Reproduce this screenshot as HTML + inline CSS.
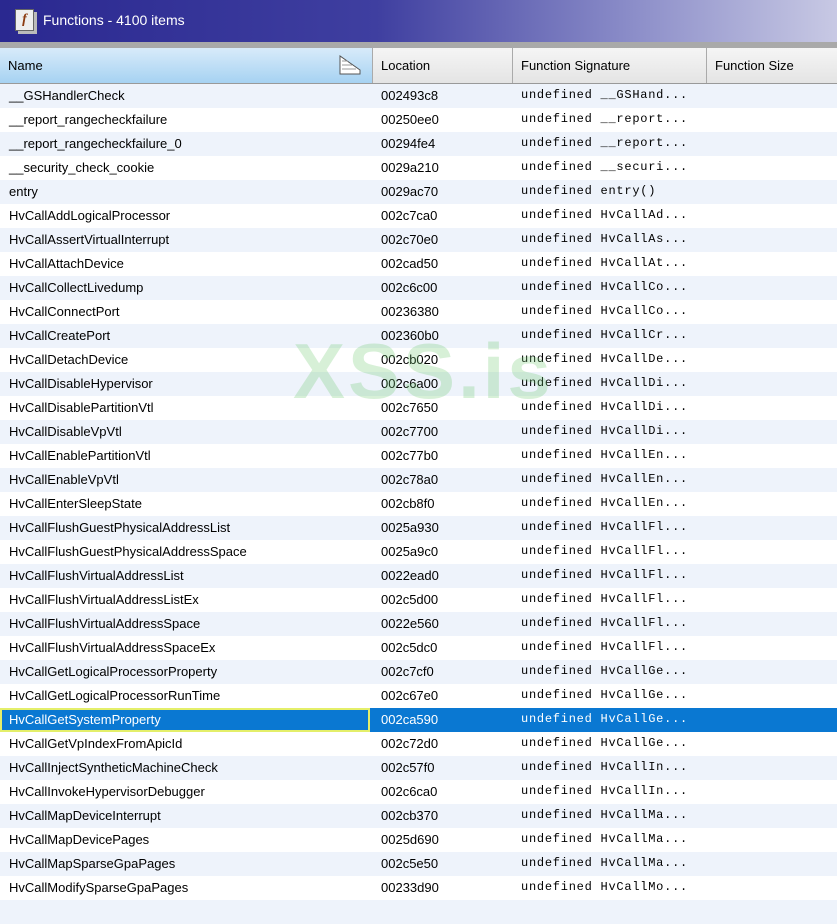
<!DOCTYPE html>
<html><head><style>
body{margin:0;width:837px;height:904px;overflow:hidden;background:#fff;font-family:"Liberation Sans",sans-serif;font-size:13px;color:#000;position:relative}
.title{position:absolute;left:0;top:0;width:837px;height:42px;background:linear-gradient(90deg,#2a2890 0%,#3f3fa0 45%,#8a8cc8 75%,#c8c9e4 100%);color:#fff;font-size:14px}
.title span{position:absolute;left:43px;top:12px}
.ic{position:absolute;left:15px;top:9px;width:17px;height:20px;background:#eee;border:1px solid #666;box-shadow:3px 3px 0 #bbb;font:italic bold 14px "Liberation Serif",serif;color:#8b3a10;text-align:center;line-height:20px}
.sep{position:absolute;top:42px;left:0;width:837px;height:6px;background:#a9a9a9}
.hdr{position:absolute;top:48px;left:0;width:837px;height:35px;background:linear-gradient(#f5f5f5,#e4e4e4);border-bottom:2px solid #999}
.hdr div{position:absolute;top:0;height:35px;line-height:36px;padding-left:8px;box-sizing:border-box;border-left:1px solid #aaa}
.rows{position:absolute;top:84px;left:0;width:837px}
.r{height:24px;line-height:24px;position:relative}
.r:nth-child(odd){background:#eef3fb}
.r span{position:absolute;top:0}
.a{left:9px}.b{left:381px}.c{left:521px;font-family:"Liberation Mono",monospace;font-size:12px;letter-spacing:0.75px;line-height:22px}
.sel{background:#0a78d2!important;color:#fff}
.wm{position:absolute;left:293px;top:326px;font:bold 78px "Liberation Sans",sans-serif;color:rgba(110,200,110,.28);letter-spacing:3px}
</style></head><body>
<div class="title"><div class="ic">f</div><span>Functions - 4100 items</span></div>
<div class="sep"></div>
<div class="hdr">
<div style="left:0;width:372px;border:0;background:linear-gradient(#d8ebfa,#a6d2f2)">Name<svg style="position:absolute;left:338px;top:7px" width="24" height="20"><path d="M2 1V19H22V15L2 1Z" fill="#fff" stroke="#555"/><path d="M4 6h6M4 10h10M4 14h14" stroke="#999"/></svg></div>
<div style="left:372px;width:140px">Location</div>
<div style="left:512px;width:194px">Function Signature</div>
<div style="left:706px;width:131px">Function Size</div>
</div>
<div class="rows">
<div class="r"><span class="a">__GSHandlerCheck</span><span class="b">002493c8</span><span class="c">undefined __GSHand...</span></div>
<div class="r"><span class="a">__report_rangecheckfailure</span><span class="b">00250ee0</span><span class="c">undefined __report...</span></div>
<div class="r"><span class="a">__report_rangecheckfailure_0</span><span class="b">00294fe4</span><span class="c">undefined __report...</span></div>
<div class="r"><span class="a">__security_check_cookie</span><span class="b">0029a210</span><span class="c">undefined __securi...</span></div>
<div class="r"><span class="a">entry</span><span class="b">0029ac70</span><span class="c">undefined entry()</span></div>
<div class="r"><span class="a">HvCallAddLogicalProcessor</span><span class="b">002c7ca0</span><span class="c">undefined HvCallAd...</span></div>
<div class="r"><span class="a">HvCallAssertVirtualInterrupt</span><span class="b">002c70e0</span><span class="c">undefined HvCallAs...</span></div>
<div class="r"><span class="a">HvCallAttachDevice</span><span class="b">002cad50</span><span class="c">undefined HvCallAt...</span></div>
<div class="r"><span class="a">HvCallCollectLivedump</span><span class="b">002c6c00</span><span class="c">undefined HvCallCo...</span></div>
<div class="r"><span class="a">HvCallConnectPort</span><span class="b">00236380</span><span class="c">undefined HvCallCo...</span></div>
<div class="r"><span class="a">HvCallCreatePort</span><span class="b">002360b0</span><span class="c">undefined HvCallCr...</span></div>
<div class="r"><span class="a">HvCallDetachDevice</span><span class="b">002cb020</span><span class="c">undefined HvCallDe...</span></div>
<div class="r"><span class="a">HvCallDisableHypervisor</span><span class="b">002c6a00</span><span class="c">undefined HvCallDi...</span></div>
<div class="r"><span class="a">HvCallDisablePartitionVtl</span><span class="b">002c7650</span><span class="c">undefined HvCallDi...</span></div>
<div class="r"><span class="a">HvCallDisableVpVtl</span><span class="b">002c7700</span><span class="c">undefined HvCallDi...</span></div>
<div class="r"><span class="a">HvCallEnablePartitionVtl</span><span class="b">002c77b0</span><span class="c">undefined HvCallEn...</span></div>
<div class="r"><span class="a">HvCallEnableVpVtl</span><span class="b">002c78a0</span><span class="c">undefined HvCallEn...</span></div>
<div class="r"><span class="a">HvCallEnterSleepState</span><span class="b">002cb8f0</span><span class="c">undefined HvCallEn...</span></div>
<div class="r"><span class="a">HvCallFlushGuestPhysicalAddressList</span><span class="b">0025a930</span><span class="c">undefined HvCallFl...</span></div>
<div class="r"><span class="a">HvCallFlushGuestPhysicalAddressSpace</span><span class="b">0025a9c0</span><span class="c">undefined HvCallFl...</span></div>
<div class="r"><span class="a">HvCallFlushVirtualAddressList</span><span class="b">0022ead0</span><span class="c">undefined HvCallFl...</span></div>
<div class="r"><span class="a">HvCallFlushVirtualAddressListEx</span><span class="b">002c5d00</span><span class="c">undefined HvCallFl...</span></div>
<div class="r"><span class="a">HvCallFlushVirtualAddressSpace</span><span class="b">0022e560</span><span class="c">undefined HvCallFl...</span></div>
<div class="r"><span class="a">HvCallFlushVirtualAddressSpaceEx</span><span class="b">002c5dc0</span><span class="c">undefined HvCallFl...</span></div>
<div class="r"><span class="a">HvCallGetLogicalProcessorProperty</span><span class="b">002c7cf0</span><span class="c">undefined HvCallGe...</span></div>
<div class="r"><span class="a">HvCallGetLogicalProcessorRunTime</span><span class="b">002c67e0</span><span class="c">undefined HvCallGe...</span></div>
<div class="r sel"><span style="position:absolute;left:0;top:0;width:366px;height:20px;border:2px solid #e4ef6a"></span><span class="a">HvCallGetSystemProperty</span><span class="b">002ca590</span><span class="c">undefined HvCallGe...</span></div>
<div class="r"><span class="a">HvCallGetVpIndexFromApicId</span><span class="b">002c72d0</span><span class="c">undefined HvCallGe...</span></div>
<div class="r"><span class="a">HvCallInjectSyntheticMachineCheck</span><span class="b">002c57f0</span><span class="c">undefined HvCallIn...</span></div>
<div class="r"><span class="a">HvCallInvokeHypervisorDebugger</span><span class="b">002c6ca0</span><span class="c">undefined HvCallIn...</span></div>
<div class="r"><span class="a">HvCallMapDeviceInterrupt</span><span class="b">002cb370</span><span class="c">undefined HvCallMa...</span></div>
<div class="r"><span class="a">HvCallMapDevicePages</span><span class="b">0025d690</span><span class="c">undefined HvCallMa...</span></div>
<div class="r"><span class="a">HvCallMapSparseGpaPages</span><span class="b">002c5e50</span><span class="c">undefined HvCallMa...</span></div>
<div class="r"><span class="a">HvCallModifySparseGpaPages</span><span class="b">00233d90</span><span class="c">undefined HvCallMo...</span></div>
<div class="r"></div>
</div>
<div class="wm">XSS.is</div>
</body></html>
